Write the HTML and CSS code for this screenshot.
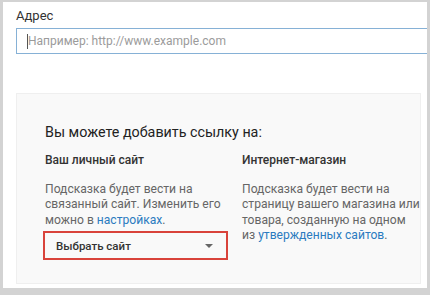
FILE: index.html
```html
<!DOCTYPE html>
<html lang="ru">
<head>
    <meta charset="UTF-8">
    <title>Адрес</title>
    <link rel="stylesheet" href="styles.css">
</head>
<body>

<div class="frame">
    <label class="field-label">Адрес</label>
    <div class="address-input">
        <span class="caret"></span>
        <span class="placeholder">Например: http://www.example.com</span>
    </div>

    <div class="link-box">
        <h2>Вы можете добавить ссылку на:</h2>
        <div class="columns">
            <div class="col">
                <h3>Ваш личный сайт</h3>
                <p>Подсказка будет вести на<br>связанный сайт. Изменить его<br>можно в <a href="#">настройках</a>.</p>
                <div class="site-select">
                    <span>Выбрать сайт</span>
                    <span class="arrow"></span>
                </div>
            </div>
            <div class="col">
                <h3>Интернет-магазин</h3>
                <p>Подсказка будет вести на<br>страницу вашего магазина или<br>товара, созданную на одном<br>из <a href="#">утвержденных сайтов</a>.</p>
            </div>
        </div>
    </div>
</div>

</body>
</html>
```

FILE: styles.css
```css
html, body {
    margin: 0;
    height: 100%;
}
body {
    font-family: Roboto, "Noto Sans", Arial, sans-serif;
    background-color: #d3d3d3;
    padding: 2px 3px 7px 3px;
    box-sizing: border-box;
}
.frame {
    background: white;
    height: 100%;
    padding: 6px 0 0 13px;
    box-sizing: border-box;
    overflow: hidden;
}
.field-label {
    display: block;
    font-size: 13px;
    color: #333;
    line-height: 16px;
}
.address-input {
    margin-top: 4px;
    height: 26px;
    border: 1px solid #86b1d6;
    border-right: none;
    box-sizing: border-box;
    display: flex;
    align-items: center;
    padding-left: 10px;
}
.caret {
    width: 1px;
    height: 15px;
    background: #555;
}
.placeholder {
    font-size: 12px;
    color: #9b9b9b;
}
.link-box {
    margin-top: 39px;
    margin-right: 6px;
    height: 191px;
    background: #f9f9f9;
    border: 1px solid #efefef;
    box-sizing: border-box;
    padding: 29px 0 0 28px;
}
.link-box h2 {
    margin: 0;
    font-size: 14.3px;
    font-weight: 400;
    color: #222;
    line-height: 18px;
}
.columns {
    display: grid;
    grid-template-columns: 197px 1fr;
    margin-top: 11px;
}
.col h3 {
    margin: 0;
    font-size: 12px;
    font-weight: 500;
    color: #333;
    line-height: 16px;
}
.col p {
    margin: 14px 0 0 0;
    font-size: 12.1px;
    color: #666;
    line-height: 15.4px;
    white-space: nowrap;
}
.col a {
    color: #2b7bc0;
    text-decoration: none;
}
.site-select {
    margin: 3px 0 0 -2px;
    width: 185px;
    height: 29px;
    border: 2px solid #d9433b;
    box-sizing: border-box;
    display: flex;
    align-items: center;
    justify-content: space-between;
    padding: 0 13px 0 11px;
    font-size: 11.5px;
    font-weight: 500;
    color: #333;
}
.arrow {
    width: 0;
    height: 0;
    border-left: 4px solid transparent;
    border-right: 4px solid transparent;
    border-top: 4px solid #666;
}
```
